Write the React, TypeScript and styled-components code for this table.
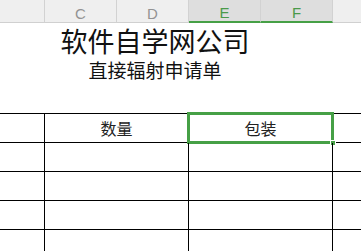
import React from "react";
import styled, { createGlobalStyle } from "styled-components";

const Global = createGlobalStyle`
  html, body { margin: 0; padding: 0; background: #fff; }
  * { box-sizing: border-box; }
`;

const GREEN = "#46a046";
const CJK = `"Noto Sans CJK SC", "Noto Sans", sans-serif`;

const Sheet = styled.div`
  width: 361px;
  height: 251px;
  overflow: hidden;
  background: #fff;
  font-family: ${CJK};
  color: #111;
`;

const HeaderRow = styled.div`
  display: grid;
  grid-template-columns: 45px 72px 72px 72px 72px 28px;
  height: 21px;
  background: #efefef;
`;

const ColHead = styled.div<{ $active?: boolean; $last?: boolean }>`
  display: flex;
  align-items: center;
  justify-content: center;
  font-family: "Liberation Sans", Arial, sans-serif;
  font-size: 15px;
  color: ${(p) => (p.$active ? "#4a9a4a" : "#939393")};
  background: ${(p) => (p.$active ? "#dedede" : "#efefef")};
  border-right: ${(p) => (p.$last ? "none" : "1px solid #d2d2d2")};
  border-bottom: ${(p) => (p.$active ? `2px solid ${GREEN}` : "1px solid #d0d0d0")};
  padding-top: ${(p) => (p.$active ? "4px" : "5px")};
`;

const TitleBlock = styled.div`
  width: 310px;
  height: 92px;
  display: flex;
  flex-direction: column;
  align-items: center;
  padding-top: 5px;
`;

const Title = styled.div`
  font-size: 27px;
  line-height: 30px;
`;

const Subtitle = styled.div`
  font-size: 19px;
  line-height: 22px;
  margin-top: 3px;
`;

const Row = styled.div`
  display: grid;
  grid-template-columns: 45px 144px 144px 28px;
  height: 29px;
  border-top: 1px solid #000;
`;

const Cell = styled.div<{ $edge?: boolean }>`
  position: relative;
  display: flex;
  align-items: center;
  justify-content: center;
  font-size: 16px;
  border-right: ${(p) => (p.$edge ? "none" : "1px solid #000")};
  color: #222;
`;

const Selection = styled.div`
  position: absolute;
  left: -2px;
  top: -2px;
  right: -2px;
  bottom: -2px;
  border: 3px solid ${GREEN};
  pointer-events: none;
`;

const Handle = styled.div`
  position: absolute;
  right: -5px;
  bottom: -5px;
  width: 6px;
  height: 6px;
  background: ${GREEN};
  border: 1px solid #fff;
`;

const columns = ["", "C", "D", "E", "F", ""];

export default function App() {
  const rows = [0, 1, 2, 3];
  return (
    <Sheet>
      <Global />
      <HeaderRow>
        {columns.map((c, i) => (
          <ColHead key={i} $active={c === "E" || c === "F"} $last={i === columns.length - 1}>
            {c}
          </ColHead>
        ))}
      </HeaderRow>
      <TitleBlock>
        <Title>软件自学网公司</Title>
        <Subtitle>直接辐射申请单</Subtitle>
      </TitleBlock>
      <Row>
        <Cell />
        <Cell>数量</Cell>
        <Cell>
          包装
          <Selection>
            <Handle />
          </Selection>
        </Cell>
        <Cell $edge />
      </Row>
      {rows.map((r) => (
        <Row key={r}>
          <Cell />
          <Cell />
          <Cell />
          <Cell $edge />
        </Row>
      ))}
    </Sheet>
  );
}
